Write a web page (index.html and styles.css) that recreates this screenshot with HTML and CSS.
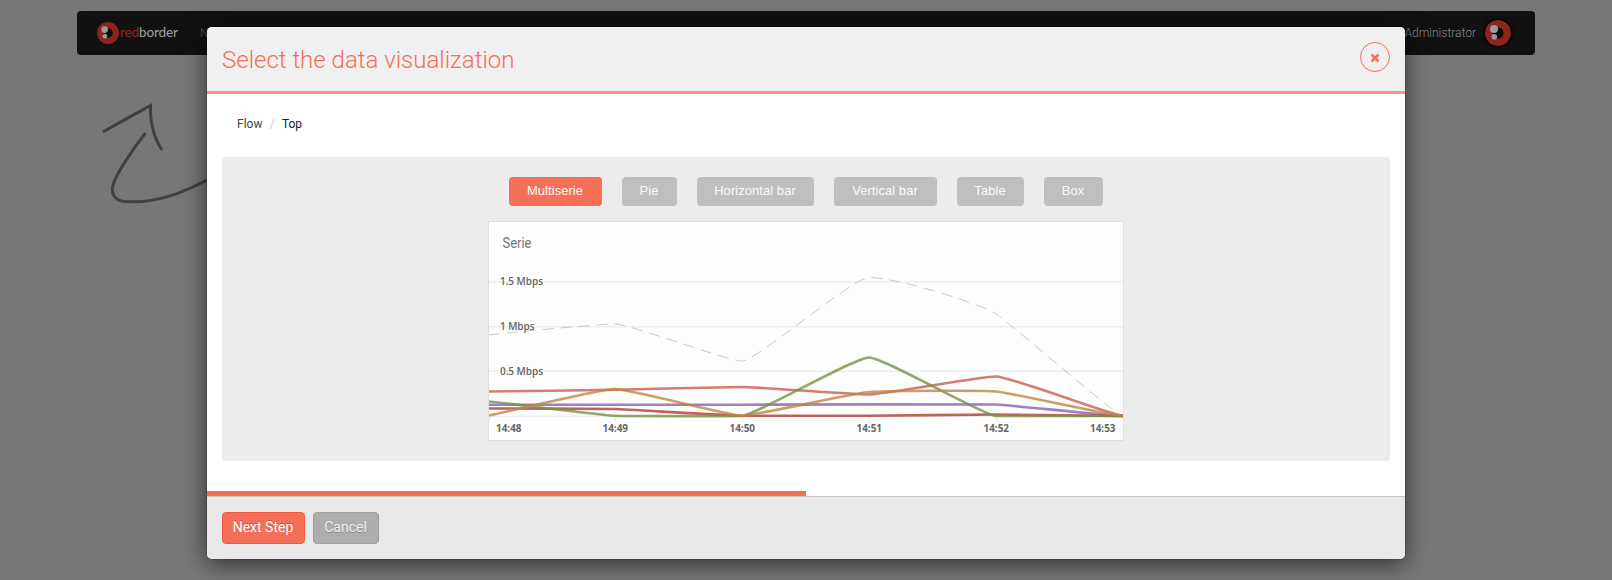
FILE: index.html
```html
<!DOCTYPE html>
<html lang="en">
<head>
<meta charset="utf-8">
<title>redborder</title>
<link rel="stylesheet" href="styles.css">
</head>
<body>
<svg width="0" height="0" class="defs">
  <symbol id="mark" viewBox="0 0 26 26">
    <circle cx="13" cy="13" r="13" fill="#8c251f"/>
    <circle cx="13" cy="13" r="5.6" fill="#0c0c0c"/>
    <circle cx="9" cy="9" r="4" fill="#999"/>
    <circle cx="9.3" cy="16.7" r="2.8" fill="#999"/>
  </symbol>
</svg>
<header class="navbar">
  <div class="brand">
    <svg class="brand-mark"><use href="#mark"/></svg>
    <span class="brand-name"><span class="red">red</span>border</span>
    <span class="nav-item">N</span>
  </div>
  <div class="user"><span>Administrator</span><svg class="avatar"><use href="#mark"/></svg></div>
</header>
<svg class="arrow" viewBox="0 0 140 110" fill="none" stroke="#404040" stroke-width="3" stroke-linejoin="miter">
  <path d="M3 32C20 22 35 14 50.500 5.500C50 23 54 38 62 50"/>
  <path d="M45.500 33C32 50 14 77 12.500 87C11 96 17 101 25 101.500C54 104 83 94 118 74"/>
</svg>
<section class="modal">
  <div class="modal-header">
    <h1>Select the data visualization</h1>
    <button class="close"><svg width="10" height="10" viewBox="0 0 10 10"><path d="M1.500 1.500L8.500 8.500M8.500 1.500L1.500 8.500" stroke="#f46f58" stroke-width="2.500"/></svg></button>
  </div>
  <div class="modal-body">
    <nav class="crumbs"><span>Flow</span><i>/</i><span class="current">Top</span></nav>
    <div class="panel">
      <div class="tabs">
        <button class="tab active w93">Multiserie</button>
        <button class="tab w55">Pie</button>
        <button class="tab w117">Horizontal bar</button>
        <button class="tab w103">Vertical bar</button>
        <button class="tab w67">Table</button>
        <button class="tab w59">Box</button>
      </div>
      <svg class="chart" width="636" height="220" viewBox="0 0 636 220">
        <rect x=".5" y=".5" width="635" height="219" fill="#fdfdfd" stroke="#dfdfdf"/>
        <path class="grid" d="M1 61H635M1 105.700H635M1 150.300H635M1 195.300H635M1.500 195V200M127.500 195V200M254.500 195V200M381.500 195V200M508.500 195V200"/>
        <text class="serie" x="14.500" y="26.500" textLength="29" lengthAdjust="spacingAndGlyphs">Serie</text>
        <g class="lines">
          <path class="total" d="M1 114C14 112 112 103 127 103C141 103 240 140 254 140C268 140 365 56.500 381 56.500C410 56.500 493 83 508 93C522 102 621 189 635 195"/>
          <path stroke="#8660b8" d="M1 183.700H254C270 183.700 492 183 508 183.500C521 184 622 195 635 195"/>
          <path stroke="#b13c34" d="M1 187.500C14 187.500 114 187.700 127 188C140 188.400 241 194.700 254 194.700H381C394 194.700 495 193.500 508 193.500C521 193.500 622 195 635 195"/>
          <path stroke="#cb5c50" d="M1 170.500C14 170.400 114 169 127 168.700C140 168.400 241 166 254 166C267 166 368 173.500 381 173.500C394 173.500 493 155.500 508 155.500C522 155.500 620 193 635 195"/>
          <path stroke="#769248" d="M1 180.500C14 181.500 114 194.200 127 194.800C140 195.300 241 195.200 254 195C267 194.500 366 136.500 381 136.500C396 136.500 495 194.500 508 195H635"/>
          <path stroke="#bf8440" d="M1 194.500C14 192 112 168 127 168C141 168 241 194.700 254 194.700C267 194.700 368 171.500 381 171C394 170 495 169 508 170.500C521 171.500 621 194 635 195"/>
        </g>
        <g class="ylab">
          <text x="12" y="64" textLength="43">1.5 Mbps</text>
          <text x="12" y="109" textLength="34.500">1 Mbps</text>
          <text x="12" y="154" textLength="43">0.5 Mbps</text>
        </g>
        <g class="xlab">
          <text x="8" y="211" textLength="25.500" lengthAdjust="spacingAndGlyphs">14:48</text>
          <text x="114.500" y="211" textLength="25.500" lengthAdjust="spacingAndGlyphs">14:49</text>
          <text x="241.500" y="211" textLength="25.500" lengthAdjust="spacingAndGlyphs">14:50</text>
          <text x="368.500" y="211" textLength="25.500" lengthAdjust="spacingAndGlyphs">14:51</text>
          <text x="495.500" y="211" textLength="25.500" lengthAdjust="spacingAndGlyphs">14:52</text>
          <text x="602" y="211" textLength="25.500" lengthAdjust="spacingAndGlyphs">14:53</text>
        </g>
      </svg>
    </div>
  </div>
  <div class="progress"><div class="bar"></div></div>
  <div class="modal-footer">
    <button class="btn primary">Next Step</button>
    <button class="btn cancel">Cancel</button>
  </div>
</section>
</body>
</html>
```

FILE: styles.css
```css
* { box-sizing: border-box; }
body { margin: 0; height: 580px; padding: 11px 77px 0; overflow: hidden; background: #777; font-family: Roboto, sans-serif; }
button { margin: 0; padding: 0; border: 0; font-family: "Liberation Sans", sans-serif; }
.defs { position: absolute; }
.navbar { display: flex; justify-content: space-between; height: 44px; padding: 0 24px 0 20px; border-radius: 4px; background: #111; }
.brand, .user { display: flex; align-items: center; }
.brand-mark { width: 22px; height: 22px; }
.brand-name { margin: -2px 0 0 1px; width: 58px; color: #999; font: 500 13.5px Lato, sans-serif; letter-spacing: -.15px; }
.red { color: #8c251f; }
.nav-item { margin-left: 22px; color: #666; font-size: 12px; font-weight: 300; }
.user { color: #888; font-size: 12px; font-weight: 300; }
.avatar { width: 26px; height: 26px; margin-left: 9px; border-radius: 50%; box-shadow: 0 0 3px 1px #000; }
.arrow { display: block; width: 140px; height: 110px; margin: 45px 0 0 23px; }
.modal { position: absolute; left: 207px; top: 27px; width: 1198px; height: 532px; border-radius: 5px; overflow: hidden; background: #fff; box-shadow: 0 0 0 1px rgba(0,0,0,.15), 0 5px 24px rgba(0,0,0,.6); }
.modal-header { display: flex; justify-content: space-between; height: 67px; padding: 15px; border-bottom: 3px solid #f79685; background: #f0f0f0; }
h1 { margin: 0; color: #f46f58; font-size: 24px; font-weight: 300; line-height: 37px; }
.close { display: flex; align-items: center; justify-content: center; width: 30px; height: 30px; padding-top: 2px; border: 1px solid #f46f58; border-radius: 50%; background: transparent; }
.modal-body { height: 397px; padding: 20px 15px 0; }
.crumbs { display: flex; height: 43px; padding-left: 15px; line-height: 20px; font-size: 12px; color: #444; }
.crumbs i { width: 19.5px; text-align: center; color: #ccc; font-style: normal; }
.crumbs .current { color: #222; }
.panel { height: 304px; padding-top: 20px; border-radius: 4px; background: #ececec; }
.tabs { display: flex; justify-content: center; gap: 20px; margin-bottom: 15px; }
.tab { height: 29px; padding: 0 1px 2px 0; border-radius: 4px; background: #bfbfbf; color: #fafafa; font-size: 13px; letter-spacing: .05px; }
.active { background: #f46f58; }
.w93 { width: 93px; }
.w55 { width: 55px; }
.w117 { width: 117px; }
.w103 { width: 103px; }
.w67 { width: 67px; }
.w59 { width: 59px; }
.chart { display: block; margin: 0 auto; }
.grid { fill: none; stroke: #eee; stroke-width: 1.5; }
.lines path { fill: none; stroke-width: 2.6; stroke-opacity: .8; }
.lines .total { stroke: #bbb; stroke-width: 1; stroke-dasharray: 11 7; }
.serie { fill: #777; font: 14px Roboto, sans-serif; }
.ylab { fill: #666; font: 600 10px "Open Sans", sans-serif; }
.xlab { fill: #666; font: 700 10px "Open Sans", sans-serif; }
.progress { height: 5px; }
.bar { width: 50%; height: 5px; background: #f46f58; }
.modal-footer { display: flex; gap: 8px; height: 63px; padding: 15px; border-top: 1px solid #c8c8c8; background: #e9e9e9; }
.btn { height: 32px; padding: 0 1px 2px 0; border: 1px solid #f15a40; border-radius: 4px; color: #fff; font-family: Roboto, sans-serif; font-size: 14px; text-shadow: 0 -1px 0 rgba(0,0,0,.25); }
.primary { width: 83px; background: #f46f58; }
.cancel { width: 66px; border-color: #9f9f9f; background: #adadad; color: #f0f0f0; text-shadow: 0 1px 0 rgba(0,0,0,.25); }
```
